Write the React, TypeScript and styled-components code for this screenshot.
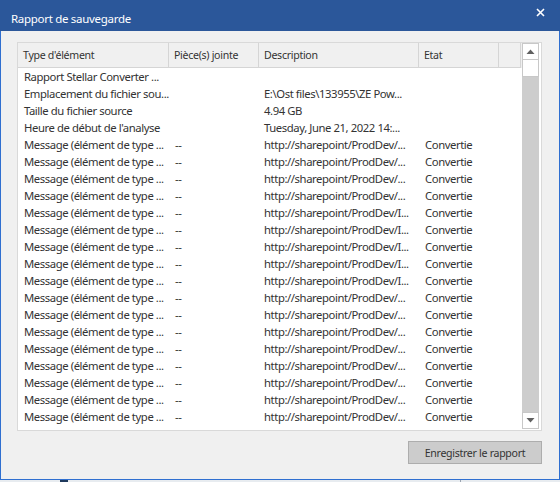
import React from "react";
import styled, { createGlobalStyle } from "styled-components";

const Global = createGlobalStyle`
  html, body { margin: 0; padding: 0; background: #e9ecef; }
  body {
    width: 560px; height: 482px; overflow: hidden;
    font-family: "Noto Sans", "Open Sans", "Liberation Sans", sans-serif;
  }
`;

const Window = styled.div`
  width: 560px;
  height: 480px;
  box-sizing: border-box;
  display: flex;
  flex-direction: column;
  background: #f0f0f0;
  border: 1px solid #2f6fd0;
  border-top: none;
`;

const TitleBar = styled.div`
  height: 31px;
  box-sizing: border-box;
  flex: none;
  background: #2b579a;
  display: flex;
  align-items: flex-start;
  justify-content: space-between;
  padding: 10px 15px 0 11px;
  margin: 0 -1px;
  color: #fff;
  font-size: 11.5px;
  letter-spacing: -0.3px;
  line-height: 18px;
`;

const Title = styled.span``;

const CloseIcon = styled.svg`
  width: 9px;
  height: 9px;
  margin-top: -2px;
`;

const Body = styled.div`
  flex: 1;
  display: flex;
  flex-direction: column;
  padding: 11px 17px 0 16px;
`;

const ListView = styled.div`
  height: 389px;
  box-sizing: border-box;
  border: 1px solid #d9d9d9;
  background: #fff;
  display: flex;
  padding-right: 2px;
`;

const Table = styled.div`
  flex: 1;
  display: flex;
  flex-direction: column;
  overflow: hidden;
`;

const cols = "151px 90px 160px 80px 22px";

const HeaderRow = styled.div`
  display: grid;
  grid-template-columns: ${cols};
  height: 25px;
  flex: none;
  background: #f0f0f0;
  box-sizing: border-box;
`;

const HeaderCell = styled.div`
  display: flex;
  align-items: center;
  padding-left: 5px;
  border-right: 1px solid #d5d5d5;
  border-bottom: 1px solid #d5d5d5;
  font-size: 10.6px;
  color: #333;
  letter-spacing: -0.3px;
  white-space: nowrap;
  overflow: hidden;
`;

const Rows = styled.div`
  flex: 1;
  overflow: hidden;
`;

const Row = styled.div`
  display: grid;
  grid-template-columns: ${cols};
  height: 17px;
  align-items: center;
`;

const Cell = styled.div<{ $pad?: number }>`
  padding-left: ${(p) => p.$pad ?? 6}px;
  font-size: 11.3px;
  color: #333;
  white-space: nowrap;
  letter-spacing: -0.42px;
  line-height: 17px;
`;

const Scrollbar = styled.div`
  width: 17px;
  flex: none;
  display: flex;
  flex-direction: column;
  padding-bottom: 1px;
`;

const ScrollButton = styled.div`
  height: 17px;
  box-sizing: border-box;
  border: 1px solid #c8c8c8;
  background: #fff;
  display: flex;
  align-items: center;
  justify-content: center;
`;

const Thumb = styled.div`
  height: 17px;
  box-sizing: border-box;
  border: 1px solid #c8c8c8;
  border-top: none;
  background: #fff;
`;

const Track = styled.div`
  flex: 1;
  background: #cdcdcd;
`;

const Arrow = styled.svg`
  width: 9px;
  height: 5px;
`;

const Footer = styled.div`
  display: flex;
  justify-content: flex-end;
  padding-top: 10px;
`;

const Button = styled.button`
  width: 134px;
  height: 23px;
  box-sizing: border-box;
  background: #cccccc;
  border: 1px solid #adadad;
  font-family: inherit;
  font-size: 10.6px;
  letter-spacing: -0.3px;
  color: #333;
  padding: 0;
`;

const BottomStrip = styled.div`
  height: 2px;
  display: flex;
  background: #e8ecf0;
`;

const StripMark = styled.div<{ $w: number; $c: string; $ml: number }>`
  width: ${(p) => p.$w}px;
  margin-left: ${(p) => p.$ml}px;
  background: ${(p) => p.$c};
`;

type R = [string, string, string, string];

const msg = (slash: boolean): R => [
  "Message (élément de type ...",
  "--",
  slash ? "http://sharepoint/ProdDev/..." : "http://sharepoint/ProdDev/I...",
  "Convertie",
];

const rows: R[] = [
  ["Rapport Stellar Converter ...", "", "", ""],
  ["Emplacement du fichier sou...", "", "E:\\Ost files\\133955\\ZE Pow...", ""],
  ["Taille du fichier source", "", "4.94 GB", ""],
  ["Heure de début de l'analyse", "", "Tuesday, June 21, 2022 14:...", ""],
  ...[0, 1, 2, 3].map(() => msg(true)),
  ...[0, 1, 2, 3, 4].map(() => msg(false)),
  ...[0, 1, 2, 3, 4, 5, 6, 7, 8].map(() => msg(true)),
];

export default function App() {
  return (
    <>
      <Global />
      <Window>
        <TitleBar>
          <Title>Rapport de sauvegarde</Title>
          <CloseIcon viewBox="0 0 9 9">
            <path d="M1 1 L8 8 M8 1 L1 8" stroke="#fff" strokeWidth="1.6" />
          </CloseIcon>
        </TitleBar>
        <Body>
          <ListView>
            <Table>
              <HeaderRow>
                <HeaderCell>Type d'élément</HeaderCell>
                <HeaderCell>Pièce(s) jointe</HeaderCell>
                <HeaderCell>Description</HeaderCell>
                <HeaderCell>Etat</HeaderCell>
                <HeaderCell />
              </HeaderRow>
              <Rows>
                {rows.map((r, i) => (
                  <Row key={i}>
                    <Cell $pad={6}>{r[0]}</Cell>
                    <Cell $pad={6}>{r[1]}</Cell>
                    <Cell $pad={5}>{r[2]}</Cell>
                    <Cell $pad={6}>{r[3]}</Cell>
                    <Cell />
                  </Row>
                ))}
              </Rows>
            </Table>
            <Scrollbar>
              <ScrollButton>
                <Arrow viewBox="0 0 9 5">
                  <path d="M0.5 5 L4.5 0.5 L8.5 5 Z" fill="#606060" />
                </Arrow>
              </ScrollButton>
              <Thumb />
              <Track />
              <ScrollButton>
                <Arrow viewBox="0 0 9 5">
                  <path d="M0.5 0 L4.5 4.5 L8.5 0 Z" fill="#606060" />
                </Arrow>
              </ScrollButton>
            </Scrollbar>
          </ListView>
          <Footer>
            <Button>Enregistrer le rapport</Button>
          </Footer>
        </Body>
      </Window>
      <BottomStrip>
        <StripMark $ml={60} $w={8} $c="#1f3a5c" />
        <StripMark $ml={392} $w={1} $c="#9aa4b0" />
      </BottomStrip>
    </>
  );
}
